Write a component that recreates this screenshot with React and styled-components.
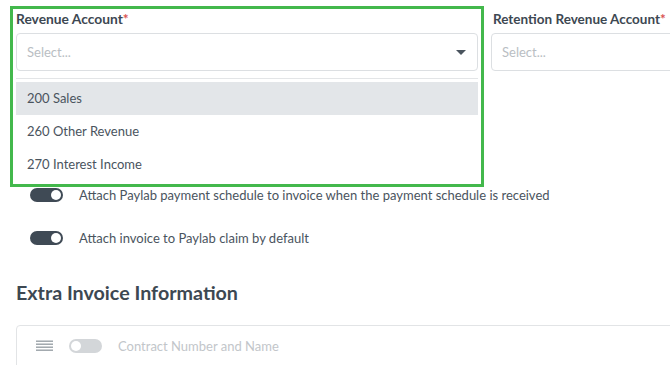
import React from "react";
import styled, { createGlobalStyle } from "styled-components";

const Global = createGlobalStyle`
  html, body { margin: 0; padding: 0; background: #fff; overflow: hidden; }
  body { font-family: "Lato", "Open Sans", sans-serif; }
`;

const Page = styled.div`
  position: relative;
  width: 670px;
  height: 365px;
  overflow: hidden;
  padding: 11px 0 0 16px;
  box-sizing: border-box;
`;

const FieldRow = styled.div`
  display: grid;
  grid-template-columns: 462px 462px;
  column-gap: 13px;
  width: 940px;
`;

const Field = styled.div`
  display: flex;
  flex-direction: column;
`;

const Label = styled.div`
  font-size: ${(p) => p.$size || 14}px;
  font-weight: 700;
  color: #3d4852;
  height: 16px;
  line-height: 16px;
  margin-bottom: 6px;
  margin-left: ${(p) => p.$offset || 0}px;
`;

const Star = styled.span`
  color: #d9534f;
`;

const SelectBox = styled.div`
  height: 38px;
  box-sizing: border-box;
  border: 1px solid #dcdfe2;
  border-radius: 4px;
  display: flex;
  align-items: center;
  justify-content: space-between;
  padding: 0 11px 0 10px;
`;

const Placeholder = styled.span`
  font-size: 13px;
  color: #b9bec3;
`;

const Caret = styled.span`
  width: 0;
  height: 0;
  border-left: 5px solid transparent;
  border-right: 5px solid transparent;
  border-top: 5px solid #4a545e;
`;

const Menu = styled.div`
  margin-top: 7px;
  border-top: 1px solid #e3e5e7;
  padding-top: 3px;
  display: flex;
  flex-direction: column;
`;

const Option = styled.div`
  height: 33px;
  display: flex;
  align-items: center;
  padding-left: 11px;
  padding-bottom: 2px;
  box-sizing: border-box;
  font-size: 13px;
  color: #4a545e;
  background: ${(p) => (p.$active ? "#e3e6e9" : "transparent")};
`;

const Toggles = styled.div`
  margin-top: 7px;
  display: flex;
  flex-direction: column;
  gap: 29px;
  padding-left: 14px;
`;

const ToggleRow = styled.div`
  display: flex;
  align-items: center;
  gap: 16px;
  height: 14px;
`;

const Switch = styled.span`
  position: relative;
  width: 33px;
  height: 14px;
  border-radius: 7px;
  background: ${(p) => (p.$on ? "#3f4a55" : "#d3d6d9")};
  flex: none;
  &::after {
    content: "";
    position: absolute;
    top: 2px;
    ${(p) => (p.$on ? "right: 2px;" : "left: 2px;")}
    width: 10px;
    height: 10px;
    border-radius: 50%;
    background: #fff;
  }
`;

const ToggleText = styled.span`
  font-size: 13px;
  color: ${(p) => (p.$muted ? "#c2c6ca" : "#4a545e")};
`;

const Heading = styled.h2`
  margin: 36px 0 0 0;
  font-size: 19.7px;
  font-weight: 700;
  color: #3d4852;
  line-height: 24px;
`;

const Card = styled.div`
  margin-top: 20px;
  width: 800px;
  height: 60px;
  border: 1px solid #e2e4e6;
  border-radius: 4px;
  box-sizing: border-box;
  display: flex;
  align-items: flex-start;
  padding: 13px 0 0 19px;
`;

const CardRow = styled.div`
  display: flex;
  align-items: center;
  gap: 16px;
  height: 14px;
`;

const Highlight = styled.div`
  position: absolute;
  left: 10px;
  top: 6px;
  width: 474px;
  height: 181px;
  border: 3px solid #43b84c;
  box-sizing: border-box;
  pointer-events: none;
`;

const Hamburger = () => (
  <svg width="17" height="12" viewBox="0 0 17 12">
    {[0.5, 3.5, 6.5, 9.5].map((y) => (
      <rect key={y} x="0" y={y} width="17" height="1.4" fill="#9aa1a7" />
    ))}
  </svg>
);

export default function App() {
  return (
    <>
      <Global />
      <Page>
        <FieldRow>
          <Field>
            <Label $size={13.8}>
              Revenue Account<Star>*</Star>
            </Label>
            <SelectBox>
              <Placeholder>Select...</Placeholder>
              <Caret />
            </SelectBox>
            <Menu>
              <Option $active>200 Sales</Option>
              <Option>260 Other Revenue</Option>
              <Option>270 Interest Income</Option>
            </Menu>
          </Field>
          <Field>
            <Label $offset={2} $size={13.5}>
              Retention Revenue Account<Star>*</Star>
            </Label>
            <SelectBox>
              <Placeholder>Select...</Placeholder>
            </SelectBox>
          </Field>
        </FieldRow>
        <Toggles>
          <ToggleRow>
            <Switch $on />
            <ToggleText>
              Attach Paylab payment schedule to invoice when the payment schedule is received
            </ToggleText>
          </ToggleRow>
          <ToggleRow>
            <Switch $on />
            <ToggleText>Attach invoice to Paylab claim by default</ToggleText>
          </ToggleRow>
        </Toggles>
        <Heading>Extra Invoice Information</Heading>
        <Card>
          <CardRow>
            <Hamburger />
            <Switch />
            <ToggleText $muted>Contract Number and Name</ToggleText>
          </CardRow>
        </Card>
        <Highlight />
      </Page>
    </>
  );
}
